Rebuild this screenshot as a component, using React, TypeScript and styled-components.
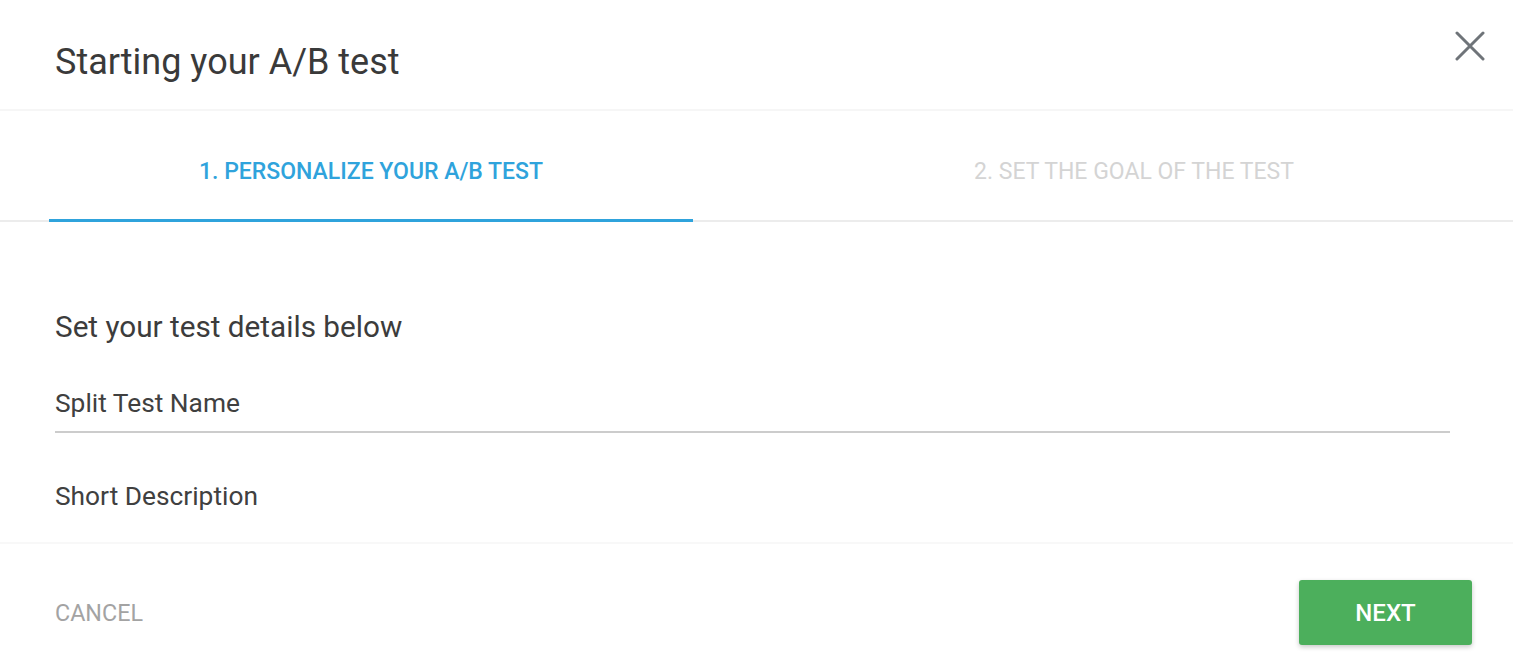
import React from 'react'
import styled, { createGlobalStyle } from 'styled-components'

const GlobalStyle = createGlobalStyle`
  html, body {
    margin: 0;
    padding: 0;
    background: #ffffff;
    font-family: Roboto, "Noto Sans", "Liberation Sans", sans-serif;
    overflow: hidden;
  }
`

interface TabProps {
  active?: boolean
  width: number
}

const tabs = [
  { label: '1. PERSONALIZE YOUR A/B TEST', width: 644, active: true },
  { label: '2. SET THE GOAL OF THE TEST', width: 882, active: false },
]

const App: React.FC = () => {
  return (
    <>
      <GlobalStyle />
      <StyledDialog>
        <StyledHeader>
          <StyledTitle>Starting your A/B test</StyledTitle>
          <StyledClose aria-label="close">
            <svg width="30" height="30" viewBox="0 0 30 30">
              <path d="M2 2 L28 28 M28 2 L2 28" stroke="#6f7479" strokeWidth="3" strokeLinecap="round" />
            </svg>
          </StyledClose>
        </StyledHeader>
        <StyledTabBar>
          {tabs.map((t) => (
            <StyledTab key={t.label} active={t.active} width={t.width}>
              {t.label}
            </StyledTab>
          ))}
        </StyledTabBar>
        <StyledBody>
          <StyledHeading>Set your test details below</StyledHeading>
          <StyledField underline>Split Test Name</StyledField>
          <StyledField>Short Description</StyledField>
        </StyledBody>
        <StyledFooter>
          <StyledCancel>CANCEL</StyledCancel>
          <StyledNext>NEXT</StyledNext>
        </StyledFooter>
      </StyledDialog>
    </>
  )
}

const StyledDialog = styled.div`
  width: 1513px;
  height: 666px;
  display: flex;
  flex-direction: column;
  overflow: hidden;
  background: #fff;
`

const StyledHeader = styled.div`
  height: 111px;
  box-sizing: border-box;
  display: flex;
  align-items: center;
  justify-content: space-between;
  padding: 0 28px 0 55px;
  border-bottom: 2px solid #f6f6f6;
`

const StyledTitle = styled.h1`
  margin: 0;
  margin-top: 14px;
  font-size: 36px;
  font-weight: 400;
  color: #3a3a3a;
`

const StyledClose = styled.button`
  background: none;
  border: 0;
  padding: 0;
  margin: 0 0 18px;
  display: flex;
  cursor: pointer;
`

const StyledTabBar = styled.div`
  height: 111px;
  box-sizing: border-box;
  display: flex;
  padding-left: 49px;
  border-bottom: 2px solid #ececec;
`

const StyledTab = styled.div<TabProps>`
  flex: 0 0 ${(p) => p.width}px;
  display: flex;
  align-items: center;
  justify-content: center;
  box-sizing: border-box;
  padding-top: 12px;
  margin-bottom: -2px;
  font-size: 23px;
  font-weight: ${(p) => (p.active ? 500 : 400)};
  color: ${(p) => (p.active ? '#2fa3dc' : '#d4d4d4')};
  border-bottom: 3px solid ${(p) => (p.active ? '#2fa3dc' : 'transparent')};
`

const StyledBody = styled.div`
  padding: 87px 63px 0 55px;
  height: 322px;
  box-sizing: border-box;
  display: flex;
  flex-direction: column;
  border-bottom: 2px solid #f8f8f8;
`

const StyledHeading = styled.div`
  font-size: 29.7px;
  color: #3c3c3c;
  margin-bottom: 44px;
`

const StyledField = styled.div<{ underline?: boolean }>`
  font-size: 26.3px;
  color: #404040;
  padding-bottom: 13px;
  margin-bottom: 48px;
  border-bottom: 2px solid ${(p) => (p.underline ? '#cccccc' : 'transparent')};
`

const StyledFooter = styled.div`
  flex: 1;
  display: flex;
  align-items: center;
  justify-content: space-between;
  padding: 15px 41px 0 55px;
`

const StyledCancel = styled.button`
  background: none;
  border: 0;
  padding: 0;
  font-family: inherit;
  font-size: 23.3px;
  color: #a3a3a3;
  cursor: pointer;
`

const StyledNext = styled.button`
  width: 173px;
  height: 65px;
  border: 0;
  border-radius: 3px;
  background: #4caf5c;
  color: #fff;
  font-family: inherit;
  font-size: 24px;
  font-weight: 500;
  box-shadow: 0 2px 5px rgba(0, 0, 0, 0.22);
  cursor: pointer;
`

export default App
